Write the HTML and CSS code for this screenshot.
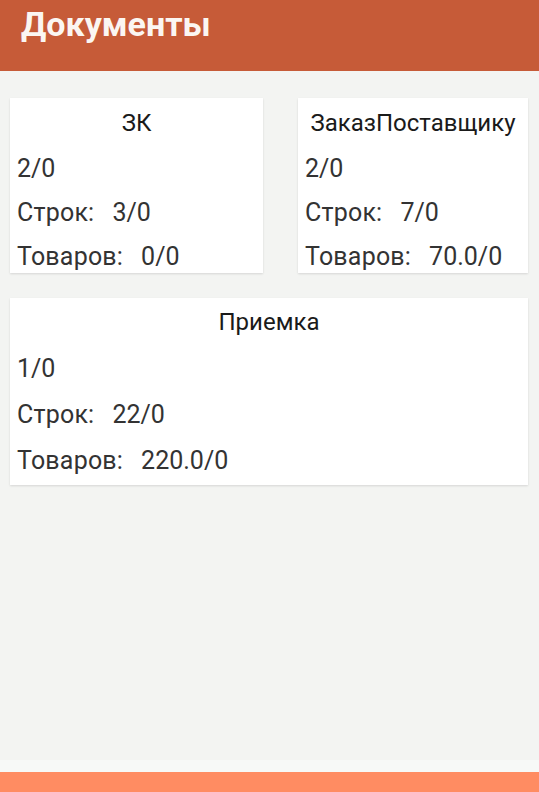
FILE: index.html
```html
<!DOCTYPE html>
<html lang="ru">

<head>
    <meta charset="UTF-8">
    <meta name="viewport" content="width=device-width, initial-scale=1.0">
    <title>Документы</title>
    <link rel="stylesheet" href="styles.css">
</head>

<body>
    <header class="toolbar">
        <h1>Документы</h1>
    </header>
    <main class="docs">
        <div class="doc-row">
            <section class="doc-card doc-card--zk">
                <div class="doc-title">ЗК</div>
                <div class="doc-line">2/0</div>
                <div class="doc-line"><span class="label">Строк:</span>3/0</div>
                <div class="doc-line"><span class="label">Товаров:</span>0/0</div>
            </section>
            <section class="doc-card doc-card--order">
                <div class="doc-title">ЗаказПоставщику</div>
                <div class="doc-line">2/0</div>
                <div class="doc-line"><span class="label">Строк:</span>7/0</div>
                <div class="doc-line"><span class="label">Товаров:</span>70.0/0</div>
            </section>
        </div>
        <section class="doc-card doc-card--wide">
            <div class="doc-title">Приемка</div>
            <div class="doc-line">1/0</div>
            <div class="doc-line"><span class="label">Строк:</span>22/0</div>
            <div class="doc-line"><span class="label">Товаров:</span>220.0/0</div>
        </section>
    </main>
    <footer>
        <div class="footer-strip"></div>
        <div class="footer-bar"></div>
    </footer>
</body>

</html>
```

FILE: styles.css
```css
body {
    font-family: Roboto, "Noto Sans", sans-serif;
    margin: 0;
    height: 792px;
    display: flex;
    flex-direction: column;
    background-color: #f3f4f2;
    overflow: hidden;
}

/* Top toolbar */
.toolbar {
    height: 71px;
    background-color: #c65b38;
    padding: 0 21px;
    box-sizing: border-box;
}

.toolbar h1 {
    margin: 0;
    padding-top: 4px;
    font-size: 34px;
    font-weight: 700;
    line-height: 40px;
    color: #fbf6f2;
}

/* Cards */
.docs {
    flex: 1;
    padding: 27px 11px 0 10px;
    display: flex;
    flex-direction: column;
    gap: 25px;
}

.doc-row {
    display: flex;
    justify-content: space-between;
}

.doc-card {
    background-color: #fff;
    box-shadow: 0 1px 2px rgba(0, 0, 0, 0.12);
    padding: 1px 7px 0;
    box-sizing: border-box;
    overflow: hidden;
    color: #1a1a1a;
}

.doc-card--zk {
    width: 253px;
    height: 175px;
}

.doc-card--order {
    width: 230px;
    height: 175px;
}

.doc-card--wide {
    height: 187px;
    padding-top: 0;
}

.doc-title {
    text-align: center;
    font-size: 24px;
    line-height: 48px;
}

.doc-line {
    font-size: 25px;
    line-height: 44px;
    color: #333;
    white-space: nowrap;
}

.doc-card--wide .doc-line {
    line-height: 46px;
}

.label {
    display: inline-block;
    margin-right: 18px;
    letter-spacing: 0.2px;
}

/* Bottom bar */
.footer-strip {
    height: 12px;
    background-color: #f7f9f7;
}

.footer-bar {
    height: 20px;
    background-color: #ff8c62;
}
```
